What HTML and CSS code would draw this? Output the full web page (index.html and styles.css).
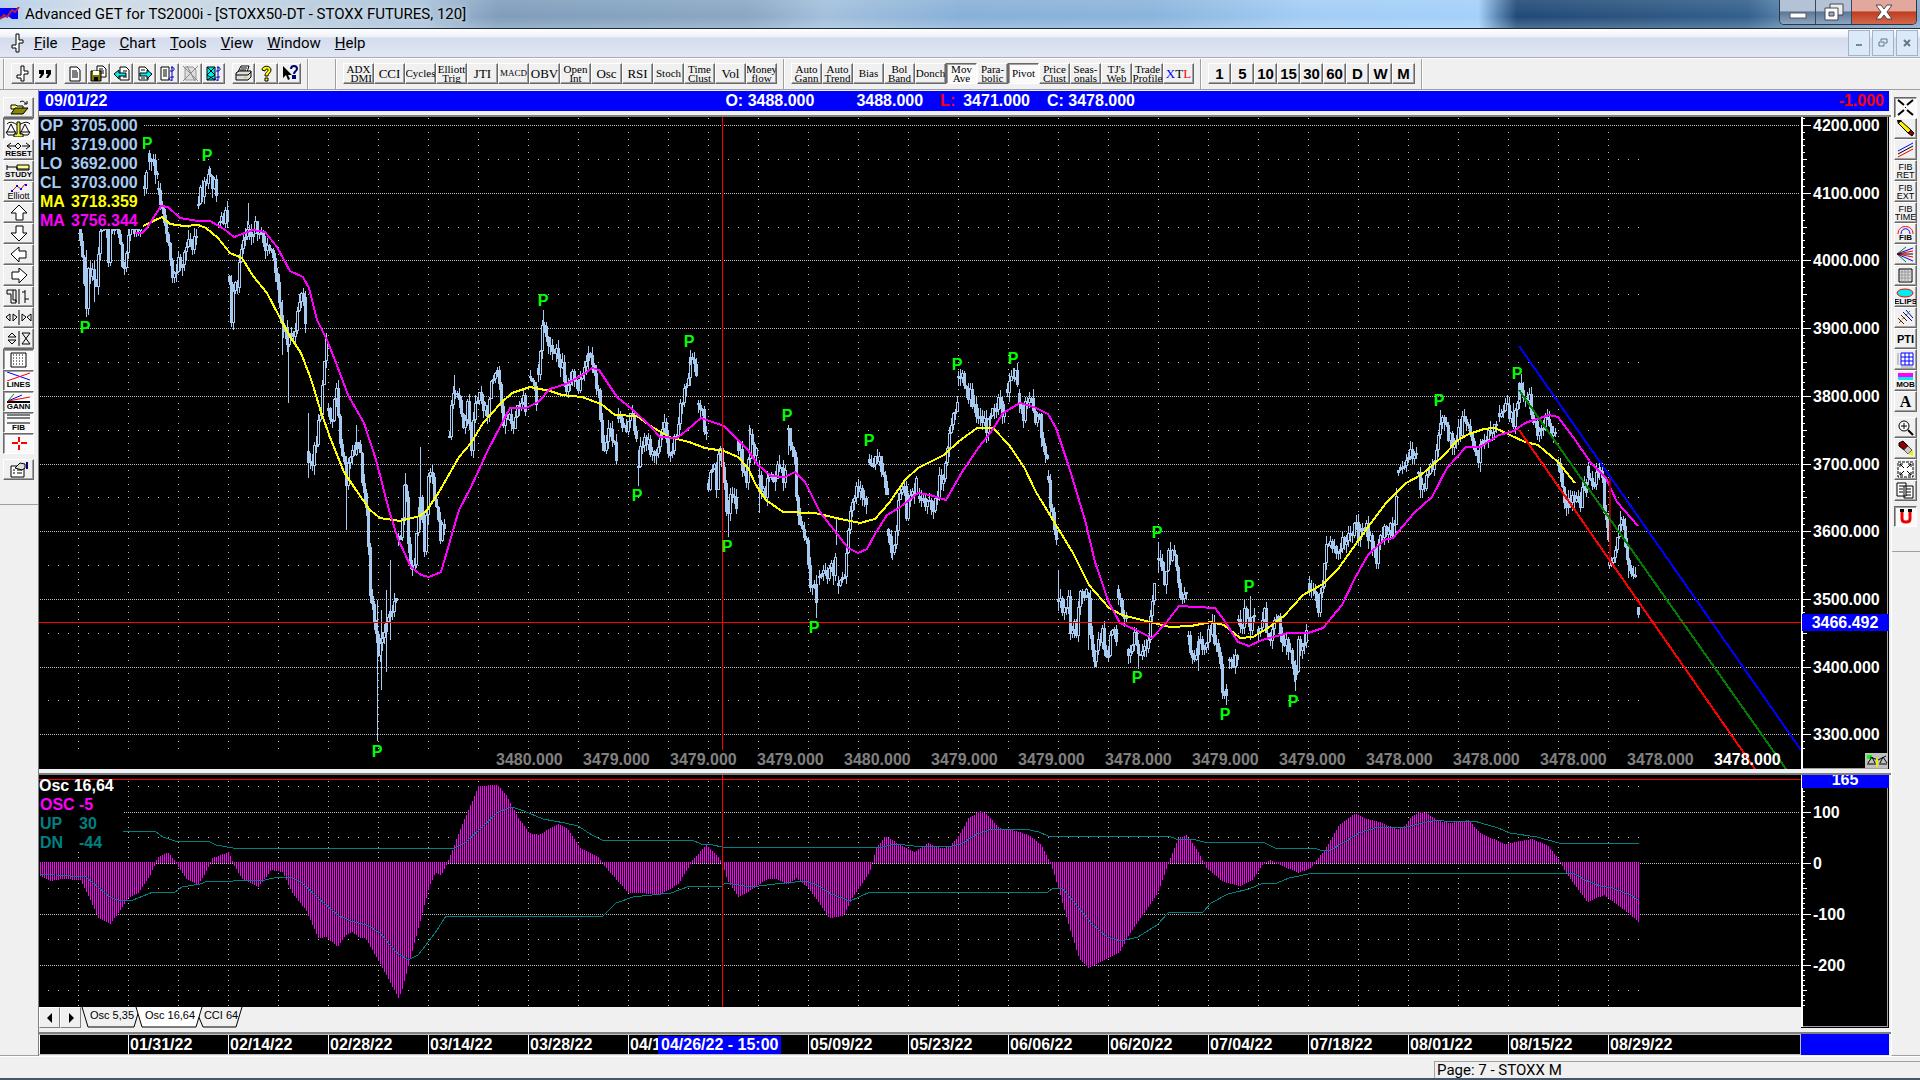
FILE: index.html
```html
<!DOCTYPE html>
<html lang="en">
<head>
    <meta charset="UTF-8">
    <meta name="viewport" content="width=device-width, initial-scale=1.0">
    <title>Advanced GET for TS2000i - [STOXX50-DT - STOXX FUTURES, 120]</title>
    <link rel="stylesheet" href="styles.css">
</head>
<body>
    <header class="titlebar">
        <svg class="app-icon" width="20" height="14"><path d="M0 1h18v11h-6l-4-3-8 3z" fill="#00f"/><path d="M0 12l4-4 3 2 5-7 3 2 4-5" fill="none" stroke="#c02040" stroke-width="2"/></svg>
        <h1>Advanced GET for TS2000i - [STOXX50-DT - STOXX FUTURES, 120]</h1>
        <div class="win-controls">
            <button aria-label="Minimize"><svg width="18" height="8"><rect x="1" y="1" width="16" height="5" fill="#fff" stroke="#556"/></svg></button>
            <button aria-label="Restore"><svg width="20" height="18"><path d="M6 1h13v11h-13z" fill="#eee" stroke="#445"/><path d="M1 5h13v12h-13z" fill="#fff" stroke="#445"/><path d="M5 9h5v4h-5z" fill="#9ab" stroke="#445"/></svg></button>
            <button class="close" aria-label="Close"><svg width="18" height="16"><path d="M1 1h5l3 4 3-4h5l-5 7 5 7h-5l-3-4-3 4h-5l5-7z" fill="#fff" stroke="#544"/></svg></button>
        </div>
    </header>

    <nav class="menubar">
        <svg class="doc-icon" width="13" height="20"><path d="M5 1h3v6h4v3h-4v9h-3v-4h-4v-3h4z" fill="#fff" stroke="#000"/></svg>
        <a href="#"><u>F</u>ile</a>
        <a href="#"><u>P</u>age</a>
        <a href="#"><u>C</u>hart</a>
        <a href="#"><u>T</u>ools</a>
        <a href="#"><u>V</u>iew</a>
        <a href="#"><u>W</u>indow</a>
        <a href="#"><u>H</u>elp</a>
        <div class="mdi-controls">
            <button aria-label="Minimize chart"><svg width="10" height="10"><path d="M2 6h6v2h-6z" fill="#789"/></svg></button>
            <button aria-label="Restore chart"><svg width="10" height="10"><path d="M3 3v-2h6v4h-2M1 4h5v4h-5z" fill="none" stroke="#678"/></svg></button>
            <button aria-label="Close chart"><svg width="10" height="10"><path d="M2 2l6 6M8 2l-6 6" stroke="#678" stroke-width="2"/></svg></button>
        </div>
    </nav>

    <div class="toolbar">
        <div class="group icons">
            <button aria-label="Bars"><svg width="17" height="17"><path d="M7 1h3v5h4v3h-4v7h-3v-3h-4v-3h4z" fill="#fff" stroke="#000"/></svg></button>
            <button aria-label="Quotes"><svg width="17" height="17"><path d="M2 5h5v4l-3 4h-2l2-4h-2zM9 5h5v4l-3 4h-2l2-4h-2z"/></svg></button>
            <span class="space"></span>
            <button aria-label="New"><svg width="17" height="17"><path d="M3 2h7l3 3v11h-10z" fill="#fff" stroke="#000"/><path d="M5 6h5M5 8h6M5 10h6M5 12h6" stroke="#000"/></svg></button>
            <button aria-label="Save"><svg width="17" height="17"><path d="M7 1h6l3 3v8h-9z" fill="#fff" stroke="#000"/><path d="M9 4h4M9 6h5M9 8h5" stroke="#000"/><path d="M1 6h10v10h-10z" fill="#770" stroke="#000"/><path d="M3 6h6v4h-6z" fill="#fff"/><path d="M4 12h4v4h-4z"/></svg></button>
            <button aria-label="Previous page"><svg width="17" height="17"><path d="M7 2h6l3 3v10h-9z" fill="#fff" stroke="#000"/><path d="M10 6h4M10 12h4" stroke="#000"/><path d="M1 9l5-4v3h7v3h-7v3z" fill="#0ee" stroke="#000"/></svg></button>
            <button aria-label="Next page"><svg width="17" height="17"><path d="M3 2h6l3 3v10h-9z" fill="#fff" stroke="#000"/><path d="M5 5h4M5 13h4" stroke="#000"/><path d="M16 9l-5-4v3h-7v3h7v3z" fill="#0ee" stroke="#000"/></svg></button>
            <button aria-label="Scroll pages"><svg width="17" height="17"><path d="M2 2h8v13h-8z" fill="#fff" stroke="#000"/><path d="M4 5h4M4 7h4M4 9h4M4 11h4" stroke="#000"/><path d="M12 3c4-2 4 3 1 3h-2m2 9c-4 1-4-3 0-3h2M13 1v15" fill="none" stroke="#00c"/></svg></button>
            <button aria-label="Delete page" disabled><svg width="17" height="17"><path d="M3 2h8l3 3v10h-11z" fill="#ddd" stroke="#999"/><path d="M1 1l15 15M16 1l-15 15M5 1l8 15" stroke="#888"/></svg></button>
            <button aria-label="Refresh pages"><svg width="17" height="17"><path d="M2 2h8v13h-8z" fill="#0ee" stroke="#000"/><path d="M2 2l8 8-8 5M10 2l-8 8 8 5" fill="none" stroke="#000"/><path d="M12 3c4-2 4 3 1 3h-2m2 9c-4 1-4-3 0-3h2M13 1v15" fill="none" stroke="#00c"/></svg></button>
            <span class="space"></span>
            <button aria-label="Print"><svg width="17" height="17"><path d="M6 1h8l-2 6h-9z" fill="#fff" stroke="#000"/><path d="M1 8l3-2h12v6l-3 3h-12z" fill="#ddd" stroke="#000"/><path d="M1 10h12M13 10l3-3M6 3h6M5 5h6" stroke="#000"/><path d="M9 12h3v1h-3z" fill="#cc0"/></svg></button>
            <button aria-label="Help"><svg width="17" height="17"><path d="M4 5c0-5 9-5 9 0 0 3-3 3-3 6h-3c0-4 3-4 3-6 0-2-3-1-3 1zM7 13h3v3h-3z" fill="#ff0" stroke="#000"/></svg></button>
            <button aria-label="Context help"><svg width="17" height="17"><path d="M2 1v12l3-3 2 5 2-1-2-4h4z"/><path d="M10 4c0-4 6-4 6 0 0 2-3 2-3 5M12 11h2v2h-2z" fill="none" stroke="#007" stroke-width="2"/></svg></button>
        </div>
        <div class="group blank"></div>
        <div class="group studies">
            <button>ADX<br>&nbsp;&nbsp;DMI</button><button class="big">CCI</button><button>Cycles</button><button>Elliott<br>Trig</button><button class="big">JTI</button><button class="small">MACD</button><button class="big">OBV</button><button>Open<br>Int</button><button class="big">Osc</button><button class="big">RSI</button><button>Stoch</button><button>Time<br>Clust</button><button class="big">Vol</button><button>Money<br>flow</button>
        </div>
        <div class="group studies">
            <button>Auto<br>Gann</button><button>Auto<br>Trend</button><button>Bias</button><button>Bol<br>Band</button><button>Donch</button><button class="on">Mov<br>Ave</button><button>Para-<br>bolic</button><button class="on">Pivot</button><button>Price<br>Clust</button><button>Seas-<br>onals</button><button>TJ's<br>Web</button><button>Trade<br>Profile</button><button class="big"><span class="blue">X</span>T<span class="red">L</span></button>
        </div>
        <div class="group periods">
            <button>1</button><button>5</button><button>10</button><button>15</button><button>30</button><button>60</button><button>D</button><button>W</button><button>M</button>
        </div>
        <div class="group rest"></div>
    </div>

    <div class="workspace">
        <aside class="side left">
            <div class="tools">
                <button aria-label="Open"><svg width="27" height="17"><path d="M6 6h5l1 1h6v3h-12z" fill="#ff8" stroke="#000"/><path d="M6 15l4-6h13l-5 6z" fill="#880" stroke="#000"/><path d="M15 3c3-2 5 0 6 2m-2 0h3v-3" fill="none" stroke="#000"/></svg></button>
                <button class="on" aria-label="Scales"><svg width="27" height="17"><path d="M2 4c4-4 8 0 11 1 4-1 8-5 12-1M6 4l-4 8M6 4l4 8M20 4l-4 8M20 4l4 8M1 12h10l-2 3h-6zM15 12h10l-2 3h-6z" fill="none" stroke="#000"/><path d="M12 2h3v12h3v3h-9v-3h3z" fill="#ee4" stroke="#000"/></svg></button>
                <button><svg width="27" height="8"><path d="M6 1l-4 3 4 3M2 4h8M21 1l4 3-4 3M25 4h-8M13 1l3 3-3 3-3-3z" fill="none" stroke="#000"/></svg><span>RESET</span></button>
                <button><svg width="27" height="8"><path d="M2 2v5M2 4h10v2h12M12 2h12v5h-12z" fill="#ff8" stroke="#000"/></svg><span>STUDY</span></button>
                <button><svg width="27" height="9"><path d="M7 8l5-5 4 3 4-5" fill="none" stroke="#f00"/><path d="M6 7h2v2h-2zM11 2h2v2h-2zM15 5h2v2h-2zM20 1h2v2h-2z" fill="#00f"/></svg><span class="wide">Elliott</span></button>
                <button aria-label="Up"><svg width="27" height="17"><path d="M14 1l8 8h-4v7h-7v-7h-5z" fill="#fff" stroke="#000"/></svg></button>
                <button aria-label="Down"><svg width="27" height="17"><path d="M14 16l8-8h-4v-7h-7v7h-5z" fill="#fff" stroke="#000"/></svg></button>
                <button aria-label="Left"><svg width="27" height="17"><path d="M6 8l8-7v4h7v7h-7v4z" fill="#fff" stroke="#000"/></svg></button>
                <button aria-label="Right"><svg width="27" height="17"><path d="M22 8l-8-7v4h-7v7h7v4z" fill="#fff" stroke="#000"/></svg></button>
                <button aria-label="Bar width"><svg width="27" height="17"><path d="M2 2h6v10h3v3h-5v-9h-4zM8 2h3v12M14 1v15M20 2v13M17 4h3M20 11h4" fill="none" stroke="#000"/></svg></button>
                <button aria-label="Stretch width"><svg width="27" height="17"><path d="M5 5v7l-4-4zM8 5v7l4-4zM14 1v15M17 5v7l4-4zM26 5v7l-4-4z" fill="none" stroke="#000"/></svg></button>
                <button aria-label="Stretch height"><svg width="27" height="17"><path d="M3 7h8l-4-4zM3 10h8l-4 4zM14 1v15M17 3h8l-8 11h8z" fill="none" stroke="#000"/></svg></button>
                <button class="on" aria-label="Grid"><svg width="27" height="17"><path d="M6 2h15v14h-15z" fill="#fff" stroke="#000"/><path d="M8 4h12M8 7h12M8 10h12M8 13h12" stroke="#000" stroke-dasharray="1 2"/></svg></button>
                <button class="on"><svg width="27" height="9"><path d="M2 0l23 8" stroke="#00f"/><path d="M2 9l23-8" stroke="#f00"/></svg><span>LINES</span></button>
                <button class="on"><svg width="27" height="10"><path d="M2 9h23" stroke="#000" stroke-width="2"/><path d="M3 8l6-7" stroke="#080"/><path d="M3 8l14-6" stroke="#00f"/><path d="M3 8l22-4" stroke="#f00"/></svg><span>GANN</span></button>
                <button class="on"><svg width="27" height="10"><path d="M2 1h23M2 4h23M2 9h23" stroke="#000"/></svg><span>FIB</span></button>
                <button class="on" aria-label="Crosshair"><svg width="27" height="17"><path d="M7 8h6M16 8h6M14 2v5M14 10v5" stroke="#f00" stroke-width="2"/></svg></button>
                <i class="gap"></i>
                <button aria-label="Properties"><svg width="27" height="17"><path d="M6 5h13v11h-13z" fill="#fff" stroke="#000"/><path d="M8 9h2M12 9h5M8 12h2M12 12h5M10 7l5-5 5 1v4l-3 2z" fill="#ddd" stroke="#000"/><path d="M21 1h2v7h-2z" fill="#007"/></svg></button>
            </div>
        </aside>

        <main class="center">
            <div class="infobar">
                <span class="date">09/01/22</span>
                <span>O: 3488.000</span>
                <span class="high">3488.000</span>
                <span class="red">L:</span>
                <span class="low">3471.000</span>
                <span>C: 3478.000</span>
                <span class="change red">-1.000</span>
            </div>
            <section class="panel price">
                <svg class="plot" id="pricePlot"></svg>
                <svg class="axis" id="priceAxis"></svg>
            </section>
            <section class="panel osc">
                <div class="osc-col">
                    <svg class="plot" id="oscPlot"></svg>
                    <div class="tabs">
                        <button class="arrow" aria-label="Previous tab"><svg width="8" height="10"><path d="M6 0v10l-5-5z"/></svg></button>
                        <button class="arrow" aria-label="Next tab"><svg width="8" height="10"><path d="M2 0v10l5-5z"/></svg></button>
                        <a href="#" class="tab"><svg width="60" height="21"><path d="M1 0l6 20h46l6-20"/></svg><span>Osc 5,35</span></a>
                        <a href="#" class="tab active"><svg width="68" height="21"><path d="M1 0l6 20h54l6-20"/></svg><span>Osc 16,64</span></a>
                        <a href="#" class="tab"><svg width="46" height="21"><path d="M1 8l5 12h33l6-20"/></svg><span>CCI 64</span></a>
                    </div>
                </div>
                <svg class="axis" id="oscAxis"></svg>
            </section>
            <div class="panel dates">
                <div class="cells">
                    <span class="first"></span><span>01/31/22</span><span>02/14/22</span><span>02/28/22</span><span>03/14/22</span><span>03/28/22</span><span class="long">04/11/22</span><span>05/09/22</span><span>05/23/22</span><span>06/06/22</span><span>06/20/22</span><span>07/04/22</span><span>07/18/22</span><span>08/01/22</span><span>08/15/22</span><span>08/29/22</span>
                    <b class="cursor-date">04/26/22 - 15:00</b>
                </div>
                <div class="corner"></div>
            </div>
        </main>

        <aside class="side right">
            <div class="tools">
                <button class="on" aria-label="Pointer"><svg width="19" height="17"><path d="M2 1l6 5M17 1l-6 5M2 16l6-5M17 16l-6-5" stroke="#000" stroke-width="2"/><path d="M9 8h1v1h-1z"/></svg></button>
                <button aria-label="Pencil"><svg width="19" height="17"><path d="M2 3l3-2 10 9-3 3z" fill="#fe0" stroke="#000"/><path d="M12 13l3-3 3 3-2 3z" fill="#800" stroke="#000"/><path d="M1 0h5l-4 4z"/></svg></button>
                <button aria-label="Parallel lines"><svg width="19" height="17"><path d="M2 10l15-8" stroke="#00f"/><path d="M2 13l15-8" stroke="#000"/><path d="M2 16l15-8" stroke="#f00"/></svg></button>
                <button><span class="two">FIB<br>RET</span></button>
                <button><span class="two">FIB<br>EXT</span></button>
                <button><span class="two">FIB<br>TIME</span></button>
                <button><svg width="19" height="9"><path d="M2 9c0-10 15-10 15 0" fill="none" stroke="#f00"/><path d="M5 9c0-7 9-7 9 0" fill="none" stroke="#00f"/></svg><span>FIB</span></button>
                <button aria-label="Gann fan"><svg width="19" height="17"><path d="M1 8l9-7M1 8l9 8" stroke="#080"/><path d="M1 8l16-6M1 8l16 7" stroke="#00f"/><path d="M1 8l16-3M1 8l16 3" stroke="#f00"/><path d="M1 8h16" stroke="#000"/></svg></button>
                <button aria-label="Gann box"><svg width="19" height="17"><path d="M3 2h13v13h-13z" fill="#ddd" stroke="#000"/><path d="M6 3v12M9 3v12M12 3v12M4 5h12M4 8h12M4 11h12" stroke="#999"/></svg></button>
                <button><svg width="19" height="10"><ellipse cx="9" cy="5" rx="8" ry="4" fill="#0ee" stroke="#f00"/></svg><span>ELIPS</span></button>
                <button aria-label="Regression"><svg width="19" height="17"><path d="M2 9l6 6" stroke="#800"/><path d="M5 6l6 6" stroke="#800"/><path d="M7 3l9 9M10 1l7 8" stroke="#00a"/><path d="M3 14l11-12" stroke="#080" stroke-dasharray="3 2"/></svg></button>
                <button><b>PTI</b></button>
                <button aria-label="Blue grid"><svg width="19" height="17"><path d="M5 2h12v12h-12zM9 2v12M13 2v12M5 6h12M5 10h12" fill="#fff" stroke="#00f"/><path d="M2 2v12M5 16h12" stroke="#999"/></svg></button>
                <button><svg width="19" height="9"><path d="M2 1h15v4h-15z" fill="#f0f"/><path d="M2 5h15v3h-15z" fill="#0ee"/></svg><span>MOB</span></button>
                <button><b class="serif">A</b></button>
                <i class="gap narrow"></i>
                <button aria-label="Zoom"><svg width="19" height="17"><circle cx="8" cy="7" r="5" fill="#fff" stroke="#000"/><path d="M5 7h6M8 4v6" stroke="#000"/><path d="M12 11l5 5" stroke="#000" stroke-width="2"/></svg></button>
                <button aria-label="Eraser"><svg width="19" height="17"><path d="M3 3l4-2 5 5-4 4-5-4z" fill="#800" stroke="#000"/><path d="M8 10l4-4 4 4-4 4z" fill="#ccc" stroke="#555"/><path d="M12 14l5-4v6z" fill="#ee0"/></svg></button>
                <button aria-label="Fit"><svg width="19" height="17"><path d="M2 1h15v15h-15z" fill="#fff" stroke="#000" stroke-dasharray="3 1"/><path d="M4 3l4 4M15 3l-4 4M4 14l4-4M15 14l-4-4M4 6v-3h3M12 3h3v3M4 11v3h3M12 14h3v-3" fill="none" stroke="#000"/></svg></button>
                <button aria-label="Copy"><svg width="19" height="17"><path d="M1 1h9v13h-9zM8 4h9v12h-9z" fill="#fff" stroke="#000"/><path d="M3 4h5M3 7h4M3 10h4M10 7h5M10 10h5M10 13h5" stroke="#000"/></svg></button>
                <i class="gap narrow"></i>
                <button class="on" aria-label="Magnet"><svg width="19" height="17"><path d="M6 3v8c0 4 8 4 8 0v-8" fill="none" stroke="#e00" stroke-width="3"/><path d="M4 1h4v3h-4zM12 1h4v3h-4z"/></svg></button>
            </div>
        </aside>
    </div>

    <footer class="statusbar"><span>Page: 7 - STOXX M</span></footer>

    <script src="chart.js"></script>
</body>
</html>
```
FILE: styles.css
```css
* {
    box-sizing: border-box;
}
body {
    margin: 0;
    height: 100vh;
    display: flex;
    flex-direction: column;
    overflow: hidden;
    background: #f0f0f0;
    font-family: "Liberation Sans", Arial, sans-serif;
    font-size: 16px;
    color: #000;
}
button {
    padding: 0;
    margin: 0;
    color: #000;
}
a {
    color: inherit;
    text-decoration: none;
}
svg {
    display: block;
}
.red {
    color: #f00;
}
.blue {
    color: #00f;
}

/* title bar */
.titlebar {
    flex: none;
    height: 29px;
    display: flex;
    align-items: center;
    border-bottom: 1px solid #1c2c3c;
    background:
        linear-gradient(rgba(255,255,255,0.1), rgba(255,255,255,0) 60%, rgba(255,255,255,0.2)),
        linear-gradient(90deg, #b4cdea, #cfdbe6 5%, #c3d4e2 12%, #a9c2da 22%, #7f9dbb 26%, #8aa8c4 39%, #a3c0dc 43%, #88b0d8 50%, #8bb4dc 60%, #a3cdf5 68%, #a4d0fa 77%, #5c88b4 78%, #204a77 79%, #2b5580 85%, #33608d 91%, #5a83ab 93%, #88a8c8);
}
.titlebar h1 {
    margin: 0 0 0 5px;
    flex: 1;
    font: 15px Roboto, "Open Sans", sans-serif;
    text-shadow: 0 0 6px #fff;
}
.win-controls {
    align-self: flex-start;
    display: flex;
    height: 25px;
    margin-right: 3px;
    border: 1px solid #26384c;
    border-top: 0;
    border-radius: 0 0 5px 5px;
    overflow: hidden;
}
.win-controls button {
    width: 36px;
    display: flex;
    align-items: center;
    justify-content: center;
    border: 0;
    border-right: 1px solid #34495f;
    background: linear-gradient(#b3c3d5 45%, #5c7896 50%, #8ea6bf);
}
.win-controls button:first-child {
    align-items: flex-end;
    padding-bottom: 4px;
}
.win-controls .close {
    width: 64px;
    border-right: 0;
    background: linear-gradient(#e3a89d 45%, #bf3c20 50%, #d4684c);
}

/* menu */
.menubar {
    flex: none;
    height: 29px;
    display: flex;
    align-items: center;
    gap: 14px;
    padding: 0 2px 0 11px;
    background: linear-gradient(#fff, #eef1f8 28%, #d5dcec 32%, #dfe5f4 90%);
    border-bottom: 1px solid #a8adb5;
    font: 15px Roboto, "Open Sans", sans-serif;
}
.doc-icon {
    margin-right: -4px;
}
.mdi-controls {
    display: flex;
    gap: 2px;
    margin-left: auto;
}
.mdi-controls button {
    width: 22px;
    height: 26px;
    display: flex;
    align-items: center;
    justify-content: center;
    border: 1px solid #9fb4cc;
    background: #dbe9f8;
}

/* toolbars */
.toolbar {
    flex: none;
    height: 32px;
    display: flex;
    border-top: 1px solid #fff;
    border-bottom: 1px solid #a0a0a0;
}
.group {
    display: flex;
    align-items: flex-start;
    padding: 4px 6px 0 7px;
    border-left: 1px solid #a0a0a0;
    box-shadow: inset 1px 0 #fff;
}
.group.icons {
    margin-left: 3px;
}
.group.blank {
    width: 28px;
    padding: 0;
}
.group.rest {
    flex: 1;
}
.group .space {
    width: 7px;
}
.toolbar button,
.tools button {
    flex: none;
    display: flex;
    align-items: center;
    justify-content: center;
    width: 23px;
    height: 21px;
    overflow: hidden;
    background: #f0f0f0;
    border: 1px solid;
    border-color: #fff #696969 #696969 #fff;
    box-shadow: inset -1px -1px #a0a0a0;
}
.toolbar .studies button {
    width: 31px;
    font: 11px/9px "Liberation Serif", "Times New Roman", serif;
}
.toolbar .studies .big {
    font-size: 13px;
}
.toolbar .studies .small {
    font-size: 9px;
}
.toolbar .periods button {
    font: bold 15px "Liberation Sans", Arial, sans-serif;
}
.toolbar button.on,
.tools button.on {
    background: #fafafa;
    border-color: #696969 #fff #fff #696969;
    box-shadow: inset 1px 1px #a0a0a0;
}

.workspace {
    flex: 1;
    min-height: 0;
    display: flex;
}
.side {
    flex: none;
    border-bottom: 1px solid #a0a0a0;
}
.side.left {
    width: 38px;
}
.side.right {
    width: 29px;
    border-left: 1px solid #fff;
}
.tools {
    display: flex;
    flex-direction: column;
    padding: 7px 3px 24px;
    border-bottom: 1px solid #a0a0a0;
}
.right .tools {
    padding: 7px 2px 24px;
}
.tools button {
    flex-direction: column;
    width: 31px;
    font: bold 8px/8px "Liberation Sans", Arial, sans-serif;
}
.right .tools button {
    width: 23px;
}
.tools .wide {
    font-size: 9px;
    font-weight: normal;
}
.tools .two {
    font-size: 9px;
    font-weight: normal;
}
.tools b {
    font-size: 11px;
}
.tools b.serif {
    font: bold 16px/16px "Liberation Serif", "Times New Roman", serif;
}
.tools .gap {
    height: 5px;
}

/* chart window */
.center {
    flex: 1;
    min-width: 0;
    display: flex;
    flex-direction: column;
    border-left: 1px solid #808080;
    padding-bottom: 1px;
}
.infobar {
    flex: none;
    height: 20px;
    display: flex;
    align-items: center;
    margin: 1px 2px 4px 0;
    padding: 0 5px 0 6px;
    background: #00f;
    color: #fff;
    font-weight: bold;
}
.infobar .date {
    width: 37%;
}
.infobar .high {
    margin: 0 17px 0 42px;
}
.infobar .low {
    margin: 0 17px 0 8px;
}
.infobar .change {
    margin-left: auto;
}
.panel {
    display: flex;
    margin-bottom: 4px;
    border-top: 2px solid #808080;
    min-height: 0;
}
.panel.price {
    flex: 652 0 0;
}
.panel.osc {
    flex: 253 0 0;
}
.plot {
    flex: 1;
    min-width: 0;
    min-height: 0;
    background: #000;
}
.osc-col {
    flex: 1;
    min-width: 0;
    display: flex;
    flex-direction: column;
    border-right: 1px solid #808080;
}
.axis {
    flex: none;
    width: 88px;
    height: 100%;
    margin-right: 2px;
    background: #000;
}
.osc .axis {
    margin-left: -1px;
}
svg text {
    font: bold 16px "Liberation Sans", Arial, sans-serif;
    white-space: pre;
}
.tabs {
    flex: none;
    display: flex;
    height: 21px;
}
.tabs .arrow {
    width: 21px;
    display: flex;
    align-items: center;
    justify-content: center;
    background: #f0f0f0;
    border: 1px solid;
    border-color: #fff #808080 #808080 #fff;
}
.tab {
    display: grid;
    margin-right: -6px;
    font-size: 11px;
    line-height: 17px;
    text-align: center;
}
.tab svg,
.tab span {
    grid-area: 1 / 1;
}
.tab span {
    padding-left: 2px;
}
.tab path {
    fill: #f0f0f0;
    stroke: #000;
}
.tab.active {
    z-index: 1;
}
.tab.active path {
    fill: #fff;
}
.panel.dates {
    flex: none;
    height: 23px;
    margin: 0;
}
.cells {
    position: relative;
    flex: 1;
    min-width: 0;
    display: flex;
    overflow: hidden;
    background: #000;
    border: 1px solid #c0c0c0;
    border-width: 1px 1px 1px 0;
    color: #fff;
    font-weight: bold;
    line-height: 19px;
}
.cells span {
    flex: 0 0 100px;
    padding-left: 1px;
    border-left: 1px solid #fff;
}
.cells .first {
    flex-basis: 89px;
}
.cells .long {
    flex-basis: 180px;
}
.cursor-date {
    position: absolute;
    left: 619px;
    top: 1px;
    padding: 0 3px;
    background: #00f;
    line-height: 18px;
}
.corner {
    width: 88px;
    margin-right: 2px;
    background: #00f;
}

.statusbar {
    flex: none;
    height: 24px;
    padding-top: 4px;
    border-top: 1px solid #fff;
    border-bottom: 2px solid #45566a;
    display: flex;
    justify-content: flex-end;
}
.statusbar span {
    width: 486px;
    border: 1px solid #a0a0a0;
    border-width: 1px 0 0 1px;
    padding-left: 2px;
    font: 15px/17px Roboto, "Open Sans", sans-serif;
}
```
FILE: chart.js
```js
// Both charts use one coordinate space: x 39-1801, price y 117-769, oscillator y 775-1007.
const LEFT = 39, RIGHT = 1801;
const priceY = p => Math.round(125 + (4200 - p) * 0.677);
const oscY = v => Math.round(862.5 - v * 0.51);

// time grid, with the short Easter week around 04/11
const gridX = [];
for (let x = 78; x <= 628; x += 50) gridX.push(x);
gridX.push(668, 708);
for (let x = 758; x <= 1608; x += 50) gridX.push(x);

// one string per run of bars between gaps
const runs = [
    '78,215 82,250 86,300 89,265 94,285 97,280 98,250 100,225 107,225 108,262 110,225 117,225 121,255 123,270 126,245 130,228 135,230 140,222',
    '144,190 146,176', '149,157 155,168 157,177',
    '158,192 162,202 166,230 170,268 174,277 178,262 182,262 188,240 192,248 197,237',
    '198,210 200,194 204,190 209,178 214,185 217,196', '219,230 224,212 227,222',
    '229,280 231,318 234,288 237,293 240,245 244,235 248,222 253,233 258,223 262,245 267,247 271,250 274,275 278,283 282,330 287,340 291,330 295,340 299,297 303,300 306,343',
    '308,455 312,465 315,445 319,420 323,363 326,342',
    '328,415 332,423 336,382 339,423 342,460 346,478 350,463 356,447 361,463 364,500 367,525 369,580 373,610 377,650 381,645 385,625 390,615 396,600',
    '398,540 402,520 405,480 408,550 413,572 418,520 420,490 424,545 428,480 431,480 436,505 440,535 444,525',
    '449,440 451,405 454,400 458,398 463,420 467,410 471,445 475,400 481,397 487,415 491,385 498,375 502,418 508,417 512,427 518,407 522,398 526,420',
    '530,380 534,387 536,405', '538,372 541,340 543,320 546,335 550,353 559,357 562,367 567,390 572,377 578,387 584,373 588,353 592,373 597,387 601,430 605,450 610,427 616,457',
    '618,423 627,427 631,417 636,433', '638,470 643,430 649,447 653,463 658,440 664,427 668,450 672,447 679,413 683,388 687,390 690,357 693,355 696,383',
    '698,407 703,417 706,437', '708,487 713,467 716,483 719,453 723,460 725,500 728,510 732,490 736,507',
    '738,445 743,473 747,480 749,433 754,447 757,450', '759,480 766,493 770,467 772,483 779,467 786,480',
    '788,433 791,447 794,453 796,493 799,527 805,540 808,563 810,593 814,587 817,603',
    '819,580 823,570 827,587 830,553 834,587 836,527', '838,587 844,583 847,547 850,510 856,490 860,497 865,507 867,493',
    '869,463 873,460 879,457 883,470 887,497', '888,533 891,547 895,537 899,493 903,483 906,520 909,480 911,497 917,477',
    '919,500 925,503 932,513 938,487 944,467 947,443 952,420 957,400', '958,380 966,383', '968,392 971,397 975,417 979,407 986,427 989,420 998,400 1005,420',
    '1007,393 1015,373 1017,380', '1019,397 1023,417 1028,397 1034,413 1040,425 1044,460 1047,457', '1048,480 1049,503 1053,523 1056,543',
    '1058,603 1064,607 1068,593 1070,627 1076,630 1079,600 1086,583', '1088,597 1090,640 1096,660 1101,630 1106,657 1109,643 1116,633',
    '1118,593 1124,613 1126,620', '1128,653 1134,630 1138,660 1143,640 1146,650 1150,617 1155,580', '1158,563 1164,577 1168,557 1174,560 1179,593 1186,597',
    '1188,640 1193,660 1198,640 1205,650 1209,627 1215,637 1221,673 1223,697 1227,693', '1229,663 1234,660 1237,657',
    '1238,623 1244,617 1250,627 1255,603', '1258,633 1264,617 1268,640', '1270,640 1276,620 1280,630 1284,643 1290,657 1295,680 1298,643 1303,643 1307,627',
    '1309,587 1314,593 1317,605', '1318,613 1322,587 1325,547 1328,540 1332,557 1341,543 1347,543 1353,527 1358,533 1364,527 1371,543 1376,557 1381,537 1388,530 1393,527 1397,497',
    '1398,477 1403,463 1408,453 1416,457', '1418,477 1421,487 1429,470 1436,453 1440,423 1445,427 1452,447 1458,433 1463,417 1467,427 1471,443 1478,460 1483,433 1491,430 1497,430',
    '1499,417 1508,410 1514,420 1519,390 1523,400 1528,393 1534,420 1538,430 1546,417 1550,430 1556,443',
    '1558,470 1562,490 1568,503 1573,490 1578,503 1584,490 1587,483', '1588,470 1593,483 1599,473 1603,483 1605,527 1608,533',
    '1609,570 1613,563 1616,550 1619,523 1622,520 1626,557 1632,570 1636,583'
];

// single long shadows: x, high, low
const spikes = [
    [86, 250, 317], [94, 265, 302], [144, 175, 192], [149, 153, 170], [209, 166, 180], [248, 203, 225], [282, 300, 355],
    [288, 330, 403], [308, 413, 478], [346, 470, 530], [356, 425, 450], [377, 600, 741], [381, 610, 690], [386, 590, 672], [390, 560, 640], [405, 473, 520],
    [420, 447, 530], [454, 375, 402], [543, 310, 340], [588, 347, 372], [638, 450, 486], [690, 351, 365],
    [728, 500, 537], [749, 425, 455], [759, 460, 513], [788, 425, 455], [816, 585, 618], [836, 519, 545],
    [891, 530, 558], [958, 374, 386], [986, 410, 443], [1014, 368, 382], [1058, 570, 606], [1088, 592, 650],
    [1095, 650, 667], [1138, 640, 669], [1158, 542, 573], [1198, 636, 671], [1226, 685, 705], [1250, 596, 640],
    [1295, 660, 691], [1440, 410, 425], [1478, 450, 468], [1519, 383, 400], [1568, 495, 512], [1599, 460, 480],
    [1620, 511, 530], [1628, 545, 578]
];

const maFast = '143,226 162,217 170,224 184,226 198,225 206,228 218,238 230,253 242,258 253,276 267,293 279,316 289,335 301,353 311,379 321,412 331,440 344,472 356,490 370,510 380,518 400,521 420,516 427,510 439,492 459,457 471,443 483,423 501,403 512,393 530,387 550,391 562,395 582,397 601,404 615,415 637,416 649,425 669,437 689,442 705,448 724,451 738,457 748,468 756,485 766,500 783,512 815,513 836,518 860,523 875,519 889,503 905,480 918,468 944,455 958,442 977,428 993,428 1009,445 1024,467 1036,492 1056,525 1073,553 1089,585 1109,608 1122,615 1146,621 1170,627 1191,626 1211,622 1224,625 1240,638 1253,637 1268,628 1284,616 1303,595 1323,584 1338,569 1353,548 1368,527 1386,503 1406,483 1421,475 1442,457 1458,440 1469,434 1484,429 1495,428 1510,435 1525,442 1538,445 1558,462 1575,483';
const maSlow = '135,233 142,233 147,228 161,206 168,207 180,218 198,221 210,221 224,229 234,237 253,230 265,232 277,247 290,271 303,277 309,288 317,320 327,340 338,368 348,395 364,423 376,460 389,510 398,539 411,567 421,575 429,577 441,572 459,510 471,487 487,452 501,425 510,408 526,408 538,402 550,389 566,384 584,374 592,368 599,370 617,397 633,410 649,425 660,437 677,438 687,430 701,418 724,426 738,440 748,450 758,465 771,476 785,477 795,472 805,482 820,512 834,530 848,548 858,553 867,549 875,534 887,515 899,508 918,493 930,495 946,500 962,472 979,447 991,432 1003,413 1020,403 1034,407 1048,414 1056,428 1069,467 1085,520 1095,562 1109,603 1120,623 1136,630 1152,638 1166,623 1179,606 1215,608 1224,620 1238,642 1249,646 1262,640 1288,633 1308,633 1323,628 1342,605 1355,578 1368,555 1384,540 1393,538 1414,513 1432,497 1447,468 1466,447 1480,447 1499,435 1514,431 1525,423 1549,415 1558,417 1573,437 1591,463 1606,478 1617,502 1638,526';

const pivots = [
    [147, 143], [207, 155], [85, 327], [377, 751], [543, 300], [689, 341], [637, 495], [727, 546], [787, 415], [814, 627],
    [869, 440], [957, 364], [1013, 358], [1157, 532], [1137, 677], [1249, 586], [1225, 714], [1293, 701], [1439, 400], [1517, 373]
];

const osc = '40,875 49,880 61,878 80,879 88,895 98,917 110,923 120,909 129,896 137,893 149,876 157,858 167,852 175,861 186,878 197,884 204,874 212,858 228,852 233,863 241,877 258,886 271,869 282,871 292,892 306,910 318,937 326,936 337,946 345,934 352,931 359,937 365,937 380,963 398,997 402,988 410,957 420,920 429,885 435,872 441,874 449,858 461,826 471,803 478,786 497,785 506,795 518,818 529,833 539,835 549,828 559,824 567,829 580,848 598,857 604,865 612,874 628,892 661,893 678,883 692,860 706,845 716,855 722,862 727,880 738,896 746,892 767,878 777,878 787,884 796,877 808,887 829,917 843,915 852,897 869,872 876,848 885,836 895,842 914,852 928,843 940,848 949,847 959,835 968,818 980,811 987,815 999,828 1015,831 1029,835 1041,845 1051,865 1058,887 1067,920 1079,958 1088,967 1105,958 1119,952 1129,933 1143,913 1157,893 1166,868 1178,838 1186,835 1195,847 1206,867 1223,881 1239,885 1251,880 1263,863 1269,860 1280,864 1298,872 1310,867 1318,858 1326,847 1338,826 1355,813 1363,818 1379,822 1397,829 1405,825 1411,817 1419,812 1426,813 1438,821 1450,823 1468,820 1480,833 1504,844 1531,839 1547,845 1559,860 1569,877 1587,901 1604,894 1616,903 1628,912 1639,922';
const upBand = '123,831 155,831 163,837 175,841 208,841 216,845 233,848 447,848 453,849 465,843 482,827 498,812 512,807 524,811 543,819 565,823 578,826 592,835 602,840 692,840 701,844 713,845 722,847 874,847 878,848 895,844 914,846 949,847 961,844 977,834 992,829 1025,829 1039,832 1048,836 1169,836 1176,839 1192,839 1204,842 1263,842 1275,848 1313,848 1324,851 1330,850 1343,843 1359,833 1375,828 1407,827 1426,822 1438,820 1450,822 1474,821 1498,828 1510,833 1537,837 1559,843 1639,843';
const downBand = '40,874 86,877 98,887 110,897 118,900 133,900 153,892 175,892 182,887 200,884 208,881 233,881 241,880 265,880 278,877 290,877 302,883 318,898 339,916 351,921 367,925 380,933 396,952 408,960 418,955 426,945 437,930 446,916 603,916 616,903 633,897 671,893 690,886 722,886 725,883 751,887 775,884 805,881 817,885 831,894 850,901 859,897 870,892 1048,892 1053,888 1062,888 1074,902 1091,923 1107,937 1121,941 1138,937 1157,925 1169,912 1203,912 1211,903 1228,894 1249,889 1263,883 1277,883 1289,878 1313,873 1573,873 1585,880 1600,886 1612,888 1628,894 1639,900';

function parse(str) {
    return str.split(' ').map(p => p.split(',').map(Number));
}

function valueAt(pts, x) {
    for (let i = 1; i < pts.length; i++) {
        if (x <= pts[i][0]) {
            const [x0, y0] = pts[i - 1], [x1, y1] = pts[i];
            return y0 + (y1 - y0) * (x - x0) / (x1 - x0);
        }
    }
    return pts[pts.length - 1][1];
}

let seed = 7;
function rnd() {
    seed = (seed * 1103515245 + 12345) % 2147483648;
    return seed / 2147483648;
}

function rect(x, y, w, h, fill) {
    return `<rect x="${x}" y="${y}" width="${w}" height="${h}" fill="${fill}"/>`;
}

function text(x, y, str, fill, anchor = 'start') {
    return `<text x="${x}" y="${y}" fill="${fill}" text-anchor="${anchor}">${str}</text>`;
}

function curve(str, color, width) {
    return `<polyline points="${str}" fill="none" stroke="${color}" stroke-width="${width}" shape-rendering="crispEdges"/>`;
}

function grid(top, bottom, toY, min, max) {
    let dots = '', html = '';
    for (let v = min; v <= max; v += 10) {
        const y = toY(v);
        if (y < top || y > bottom) continue;
        gridX.forEach(x => dots += `M${x} ${y}h1v1h-1z`);
        if (v % 100 === 0) {
            html += `<path d="M${LEFT + 1} ${y + 0.5}H1799" stroke="#c0c0c0" stroke-dasharray="1 1" shape-rendering="crispEdges"/>`;
        } else if (v % 50 === 0) {
            for (let x = 48; x <= 1638; x += 10) dots += `M${x} ${y}h1v1h-1z`;
        }
    }
    return html + `<path d="${dots}" fill="#c0c0c0"/>`;
}

function axis(top, bottom, toY, min, max, format) {
    let html = rect(1801, top, 2, bottom - top, '#fff') + rect(1887, top, 1, bottom - top, '#a0a0a0') + rect(1803, bottom - 1, 85, 1, '#a0a0a0');
    for (let v = min; v <= max; v += 10) {
        const y = toY(v);
        if (y < top || y > bottom - 18) continue;
        html += rect(1803, y, v % 100 === 0 ? 8 : v % 50 === 0 ? 4 : 2, 1, '#fff');
        if (v % 100 === 0) html += text(1813, y + 6, format(v), '#fff');
    }
    return html;
}

function candles() {
    let html = '';
    runs.forEach(run => {
        const pts = parse(run);
        let open = pts[0][1] - 4;
        for (let x = pts[0][0]; x <= pts[pts.length - 1][0]; x += 2) {
            const close = Math.round(valueAt(pts, x) + (rnd() - 0.5) * 18);
            const top = Math.min(open, close), size = Math.max(Math.abs(open - close), 2);
            const high = Math.round(top - rnd() * 9), low = Math.round(top + size + rnd() * 9);
            html += rect(x, high, 1, low - high, '#a6caf0') + rect(x - 1, top, 3, size, '#a6caf0');
            if (close < open && size > 3) html += rect(x, top + 1, 1, size - 2, '#000');
            open = close;
        }
    });
    spikes.forEach(([x, high, low]) => html += rect(x, high, 1, low - high, '#a6caf0'));
    return html + rect(1637, 607, 3, 8, '#a6caf0') + rect(1638, 607, 1, 11, '#a6caf0');
}

function drawPrice() {
    let html = grid(117, 752, priceY, 3280, 4210);
    html += candles() + curve(maFast, '#ff0', 2) + curve(maSlow, '#f0f', 2);
    html += rect(1609, 478, 2, 85, '#900000');
    html += curve('1519,346 1801,750', '#00f', 2) + curve('1519,390 1786,769', '#008000', 2) + curve('1519,430 1755,769', '#f00', 2);
    html += rect(LEFT, 622, RIGHT - LEFT, 1, '#f00') + rect(722, 117, 1, 633, '#f00');
    pivots.forEach(([x, y]) => html += text(x, y + 6, 'P', '#0f0', 'middle'));

    html += rect(LEFT, 117, 104, 112, '#000');
    [['OP', '3705.000'], ['HI', '3719.000'], ['LO', '3692.000'], ['CL', '3703.000'], ['MA', '3718.359'], ['MA', '3756.344']].forEach(([k, v], i) => {
        const color = i < 4 ? '#a6caf0' : i === 4 ? '#ff0' : '#f0f';
        html += text(40, 131 + i * 19, k, color) + text(71, 131 + i * 19, v, color);
    });
    const closes = [3480, 3479, 3479, 3479, 3480, 3479, 3479, 3478, 3479, 3479, 3478, 3478, 3478, 3478, 3478];
    closes.forEach((v, i) => html += text(496 + i * 87, 765, v + '.000', i === 14 ? '#fff' : '#808080'));
    document.getElementById('pricePlot').innerHTML = `<g transform="translate(-39 -117)">${html}</g>`;

    let ax = axis(117, 769, priceY, 3280, 4210, v => v + '.000');
    ax += rect(1802, 614, 87, 17, '#00f') + text(1845, 628, '3466.492', '#fff', 'middle');
    // scale button in the corner
    ax += rect(1865, 753, 23, 15, '#c0c0c0') + rect(1867, 755, 5, 4, '#0f0');
    ax += '<path d="M1868 763l4-6 3 6M1880 763l3-6 4 6M1867 764h9M1879 764h8M1870 757l8 3 8-4" fill="none" stroke="#000"/><path d="M1877 758v9" stroke="#ee0" stroke-width="2"/>';
    document.getElementById('priceAxis').innerHTML = `<g transform="translate(-1801 -117)">${ax}</g>`;
}

function drawOsc() {
    let html = grid(775, 1006, oscY, -280, 160);
    const pts = parse(osc);
    for (let x = 40; x <= 1638; x += 2) {
        const y = Math.round(valueAt(pts, x));
        html += rect(x, Math.min(y, 862), 1, Math.abs(y - 862) + 1, '#f0f');
    }
    html += curve(upBand, '#008080', 1) + curve(downBand, '#008080', 1);
    html += rect(LEFT, 775, 84, 76, '#000');
    html += rect(LEFT, 779, RIGHT - LEFT, 1, '#f00') + rect(722, 775, 1, 232, '#f00');
    html += text(39, 791, 'Osc 16,64', '#fff');
    [['OSC', '-5', '#f0f'], ['UP', '30', '#008080'], ['DN', '-44', '#008080']].forEach(([k, v, color], i) => {
        html += text(40, 810 + i * 19, k, color) + text(79, 810 + i * 19, v, color);
    });
    document.getElementById('oscPlot').innerHTML = `<g transform="translate(-39 -775)">${html}</g>`;

    let ax = axis(775, 1027, oscY, -280, 160, v => v);
    ax += rect(1802, 775, 87, 13, '#00f') + text(1845, 785, '165', '#fff', 'middle');
    document.getElementById('oscAxis').innerHTML = `<g transform="translate(-1801 -775)">${ax}</g>`;
}

drawPrice();
drawOsc();
```
